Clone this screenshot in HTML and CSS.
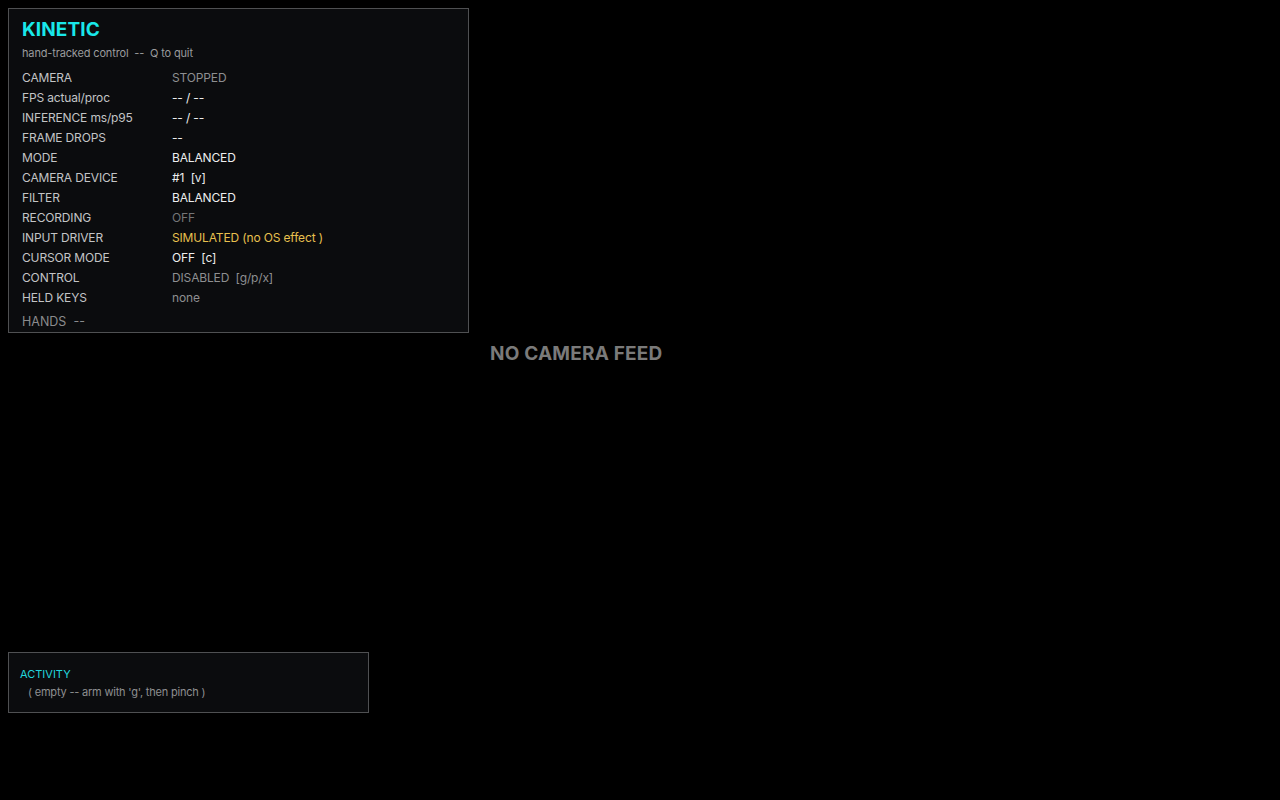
FILE: index.html
```html
<!DOCTYPE html>
<html>
<head>
<meta charset="utf-8">
<link rel="stylesheet" href="styles.css">
</head>
<body>
<div class="screen">
  <section class="hud">
    <h1 class="title">KINETIC</h1>
    <div class="subtitle">hand-tracked control &nbsp;-- &nbsp;Q to quit</div>
    <div class="rows">
      <div class="row"><span class="label">CAMERA</span><span class="val dim">STOPPED</span></div>
      <div class="row"><span class="label">FPS actual/proc</span><span class="val">-- / --</span></div>
      <div class="row"><span class="label">INFERENCE ms/p95</span><span class="val">-- / --</span></div>
      <div class="row"><span class="label">FRAME DROPS</span><span class="val">--</span></div>
      <div class="row"><span class="label">MODE</span><span class="val">BALANCED</span></div>
      <div class="row"><span class="label">CAMERA DEVICE</span><span class="val">#1 &nbsp;[v]</span></div>
      <div class="row"><span class="label">FILTER</span><span class="val">BALANCED</span></div>
      <div class="row"><span class="label">RECORDING</span><span class="val dimmer">OFF</span></div>
      <div class="row"><span class="label">INPUT DRIVER</span><span class="val warn">SIMULATED (no OS effect )</span></div>
      <div class="row"><span class="label">CURSOR MODE</span><span class="val">OFF &nbsp;[c]</span></div>
      <div class="row"><span class="label">CONTROL</span><span class="val dim">DISABLED &nbsp;[g/p/x]</span></div>
      <div class="row"><span class="label">HELD KEYS</span><span class="val dim">none</span></div>
    </div>
    <div class="hands">HANDS &nbsp;--</div>
  </section>
  <div class="feed">NO CAMERA FEED</div>
  <section class="activity">
    <div class="act-title">ACTIVITY</div>
    <div class="act-line">( empty -- arm with 'g', then pinch )</div>
  </section>
</div>
</body>
</html>
```

FILE: styles.css
```css
html, body {
  margin: 0;
  padding: 0;
  background: #000;
  width: 1280px;
  height: 800px;
  overflow: hidden;
  font-family: Inter, "Noto Sans", "Liberation Sans", sans-serif;
}

.screen {
  display: flex;
  flex-direction: column;
  align-items: flex-start;
  padding: 8px;
}

.hud {
  box-sizing: border-box;
  width: 461px;
  height: 325px;
  border: 1px solid #4f5052;
  background: #0b0c0e;
  padding: 9px 13px 0 13px;
}

.title {
  margin: 0;
  font-size: 19px;
  line-height: 24px;
  font-weight: 700;
  color: #19e8ea;
  letter-spacing: 0.1px;
}

.subtitle {
  margin-top: 4px;
  font-size: 11px;
  line-height: 14px;
  color: #9a9b9d;
  letter-spacing: -0.15px;
}

.rows {
  margin-top: 7px;
  display: flex;
  flex-direction: column;
}

.row {
  display: flex;
  height: 20px;
  align-items: center;
  font-size: 12px;
  letter-spacing: -0.15px;
}

.label {
  width: 150px;
  flex: none;
  color: #c3c4c6;
}

.val {
  color: #eeeeee;
}

.val.dim {
  color: #8e8f91;
}

.val.dimmer {
  color: #747577;
}

.val.warn {
  color: #e8c04e;
}

.hands {
  margin-top: 7px;
  font-size: 12.5px;
  line-height: 16px;
  color: #8a8b8d;
}

.feed {
  margin-top: 9px;
  margin-left: 482px;
  font-size: 19px;
  line-height: 24px;
  font-weight: 700;
  color: #7a7a7a;
  letter-spacing: 0.2px;
}

.activity {
  box-sizing: border-box;
  margin-top: 286px;
  width: 361px;
  height: 61px;
  border: 1px solid #4f5052;
  background: #0b0c0e;
  padding: 14px 11px 0 11px;
}

.act-title {
  font-size: 11px;
  line-height: 14px;
  color: #22d6dc;
}

.act-line {
  margin-top: 4px;
  padding-left: 8px;
  font-size: 11px;
  line-height: 14px;
  color: #8e8f91;
  letter-spacing: -0.2px;
}
```
